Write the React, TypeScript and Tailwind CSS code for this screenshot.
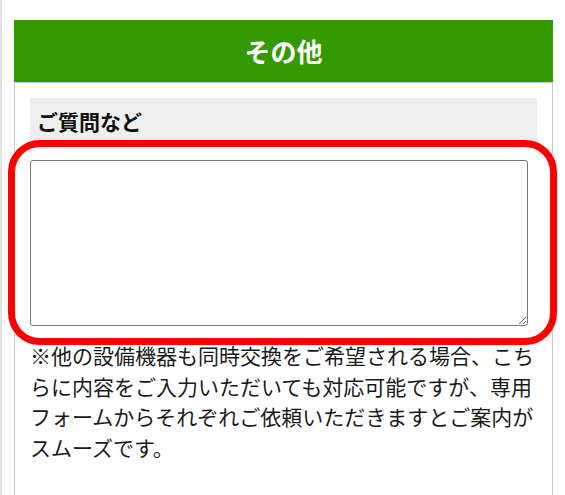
import React from 'react';

const jp = { fontFamily: '"Noto Sans CJK JP", "Noto Sans", sans-serif' };

export default function App() {
  return (
    <div
      className="w-[565px] h-[495px] overflow-hidden bg-white border-l-2 border-[#e2e2e2] pl-[12px] pt-[20px]"
      style={jp}
    >
      <section className="w-[539px] h-[500px] flex flex-col">
        {/* Header */}
        <h2 className="h-[62px] shrink-0 bg-[#339a02] text-white text-[26px] font-bold flex items-center justify-center leading-none">
          その他
        </h2>

        {/* Body */}
        <div className="flex-1 border border-[#cccccc] pt-[15px] px-[15px]">
          <div className="h-[47px] bg-[#eeeeee] px-[7px] flex items-center">
            <span className="text-[21px] font-bold text-[#111111] leading-none">ご質問など</span>
          </div>

          <div className="relative mt-[15px] w-[498px] h-[166px]">
            <textarea
              className="block w-[498px] h-[166px] border border-[#767676] rounded-[3px] bg-white"
              aria-label="ご質問など"
            />
            {/* highlight ring */}
            <div className="absolute left-[-22px] top-[-20px] w-[549px] h-[205px] border-[7px] border-[#ff0000] rounded-[32px] pointer-events-none" />
          </div>

          <p className="mt-[14px] text-[21px] leading-[30.5px] text-[#1a1a1a]">
            ※他の設備機器も同時交換をご希望される場合、こちらに内容をご入力いただいても対応可能ですが、専用フォームからそれぞれご依頼いただきますとご案内がスムーズです。
          </p>
        </div>
      </section>
    </div>
  );
}
